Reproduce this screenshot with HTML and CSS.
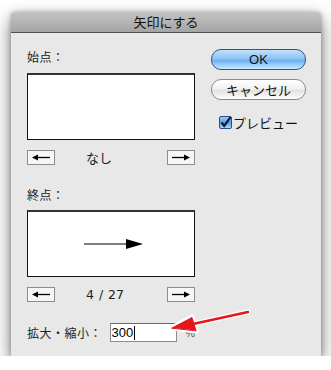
FILE: index.html
```html
<!DOCTYPE html>
<html lang="ja">
<head>
<meta charset="utf-8">
<link rel="stylesheet" href="styles.css">
</head>
<body>
<div class="window">
  <div class="titlebar">矢印にする</div>
  <div class="content">
    <div class="left">
      <div class="label first">始点：</div>
      <div class="preview"></div>
      <div class="nav">
        <div class="arrbtn"><svg width="26" height="13" viewBox="0 0 26 13"><line x1="8" y1="6.5" x2="22" y2="6.5" stroke="#000" stroke-width="1.3"/><polygon points="4,6.5 10,3.5 10,9.5" fill="#000"/></svg></div>
        <div class="navtext">なし</div>
        <div class="arrbtn"><svg width="26" height="13" viewBox="0 0 26 13"><line x1="4" y1="6.5" x2="18" y2="6.5" stroke="#000" stroke-width="1.3"/><polygon points="22,6.5 16,3.5 16,9.5" fill="#000"/></svg></div>
      </div>
      <div class="label second">終点：</div>
      <div class="preview end">
        <svg width="70" height="14" viewBox="0 0 70 14"><line x1="1" y1="7" x2="50" y2="7" stroke="#555" stroke-width="1.6"/><polygon points="43,2 60,7 43,12" fill="#000"/></svg>
      </div>
      <div class="nav">
        <div class="arrbtn"><svg width="26" height="13" viewBox="0 0 26 13"><line x1="8" y1="6.5" x2="22" y2="6.5" stroke="#000" stroke-width="1.3"/><polygon points="4,6.5 10,3.5 10,9.5" fill="#000"/></svg></div>
        <div class="navtext num">4 / 27</div>
        <div class="arrbtn"><svg width="26" height="13" viewBox="0 0 26 13"><line x1="4" y1="6.5" x2="18" y2="6.5" stroke="#000" stroke-width="1.3"/><polygon points="22,6.5 16,3.5 16,9.5" fill="#000"/></svg></div>
      </div>
      <div class="scale">
        <span class="scalelabel">拡大・縮小：</span>
        <div class="input"><span>300</span><span class="caret"></span></div>
        <span class="pct">%</span>
      </div>
    </div>
    <div class="right">
      <div class="btn ok">OK</div>
      <div class="btn cancel">キャンセル</div>
      <div class="check">
        <svg class="box" width="13" height="13" viewBox="0 0 13 13">
          <defs><linearGradient id="cb" x1="0" y1="0" x2="0" y2="1"><stop offset="0" stop-color="#a8d0f5"/><stop offset="0.5" stop-color="#5a9de3"/><stop offset="1" stop-color="#b5dcff"/></linearGradient></defs>
          <rect x="0.5" y="0.5" width="12" height="12" rx="1.5" fill="url(#cb)" stroke="#2c4a86"/>
          <path d="M2.5 6.5 L5.2 10 L11.5 1.2" fill="none" stroke="#0d1a33" stroke-width="2.2"/>
        </svg>
        <span>プレビュー</span>
      </div>
    </div>
  </div>
  <svg class="redarrow" width="90" height="30" viewBox="0 0 90 30">
    <g stroke="#fff" stroke-width="5" stroke-linejoin="round" stroke-linecap="round" fill="#fff">
      <line x1="80" y1="3" x2="25" y2="15"/>
      <polygon points="4,19 24,8 28,22"/>
    </g>
    <g fill="#e4171c" stroke="#e4171c" stroke-width="2.4" stroke-linecap="round">
      <line x1="80" y1="3" x2="25" y2="15"/>
      <polygon points="4,19 24,8.5 28,21.5" stroke-width="1"/>
    </g>
  </svg>
</div>
</body>
</html>
```
FILE: styles.css
```css
html, body {
  margin: 0;
  padding: 0;
  background: #fff;
}
body {
  padding: 12px 0 0 11px;
  font-family: "Noto Sans CJK JP", "Liberation Sans", sans-serif;
  color: #111;
}
.window {
  position: relative;
  width: 310px;
  height: 344px;
  background: #e8e8e8;
  box-shadow: 0 7px 18px rgba(0,0,0,0.55), 0 0 4px rgba(0,0,0,0.25);
  border-radius: 4px 4px 0 0;
}
.titlebar {
  height: 20px;
  border-bottom: 1px solid #505050;
  border-radius: 4px 4px 0 0;
  background: linear-gradient(#c4c4c4, #a4a4a4);
  text-align: center;
  font-size: 13px;
  line-height: 20px;
  color: #111;
}
.content {
  display: flex;
  padding: 0 15px 0 16px;
}
.left {
  width: 168px;
  display: flex;
  flex-direction: column;
}
.label {
  font-size: 12px;
  line-height: 16px;
  height: 16px;
  letter-spacing: 0.5px;
  color: #222;
}
.label.first { margin-top: 16px; }
.label.second { margin-top: 22px; }
.preview {
  height: 64px;
  margin-top: 8px;
  background: #fff;
  border: 1px solid #111;
  border-top: 2px solid #333;
}
.label.second + .preview { margin-top: 7px; }
.preview.end {
  display: flex;
  align-items: center;
  justify-content: center;
}
.preview.end svg { margin-left: 13px; margin-top: -1px; }
.nav {
  display: flex;
  align-items: center;
  height: 15px;
  margin-top: 10px;
}
.arrbtn {
  width: 26px;
  height: 13px;
  border: 1px solid #8c8c8c;
  background: #f6f6f6;
  display: flex;
}
.navtext {
  flex: 1;
  padding-left: 31px;
  font-size: 13px;
  line-height: 15px;
  color: #222;
}
.navtext.num {
  font-family: "DejaVu Sans", sans-serif;
  font-size: 12.5px;
  word-spacing: 1px;
}
.scale {
  display: flex;
  align-items: center;
  margin-top: 21px;
  height: 19px;
}
.scalelabel {
  font-size: 12px;
  width: 83px;
  letter-spacing: 0.5px;
  color: #222;
}
.input {
  width: 65px;
  height: 17px;
  background: #fff;
  border: 1px solid #8c8c8c;
  border-top-color: #6a6a6a;
  display: flex;
  align-items: center;
  padding-left: 1px;
  font-family: "Liberation Sans", sans-serif;
  font-size: 13px;
  color: #000;
}
.caret {
  width: 1px;
  height: 14px;
  background: #000;
  margin-left: 1px;
}
.pct {
  margin-left: 8px;
  font-size: 11px;
  color: #555;
  font-family: "Liberation Sans", sans-serif;
}
.right {
  margin-left: 16px;
  width: 95px;
  display: flex;
  flex-direction: column;
}
.btn {
  height: 19px;
  border-radius: 10px;
  text-align: center;
  font-size: 13px;
  line-height: 19px;
  color: #111;
}
.ok {
  margin-top: 16px;
  border: 1px solid #3b4e8c;
  background: linear-gradient(#c3e0fb 0%, #8ec3f3 45%, #6fb0ee 55%, #a6d6ff 85%, #c9ebff 100%);
  font-family: "Liberation Sans", "Noto Sans CJK JP", sans-serif;
}
.cancel {
  margin-top: 9px;
  border: 1px solid #8a8a8a;
  background: linear-gradient(#ffffff 0%, #f2f2f2 45%, #e2e2e2 55%, #f4f4f4 85%, #ffffff 100%);
}
.check {
  display: flex;
  align-items: center;
  margin-top: 15px;
  margin-left: 8px;
  font-size: 13px;
  height: 14px;
}
.check .box { margin-right: 1px; }
.redarrow {
  position: absolute;
  left: 157px;
  top: 297px;
}
```
